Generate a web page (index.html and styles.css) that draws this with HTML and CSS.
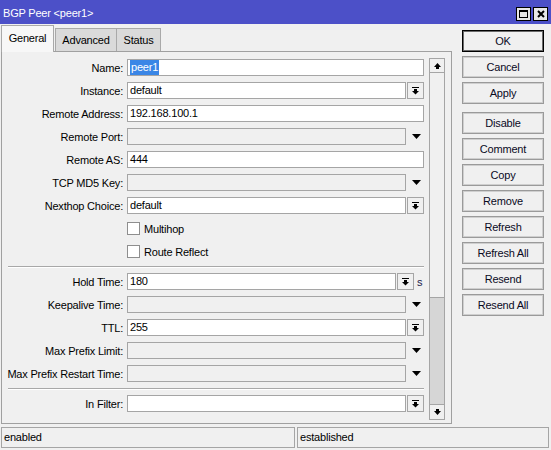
FILE: index.html
```html
<!DOCTYPE html>
<html>
<head>
<meta charset="utf-8">
<link rel="stylesheet" href="styles.css">
</head>
<body>
<div class="window">
  <div class="titlebar">
    <span class="title">BGP Peer &lt;peer1&gt;</span>
    <div class="tb-btns">
      <span class="tb-btn"><span class="max-icon"></span></span>
      <span class="tb-btn"><svg width="8" height="8" viewBox="0 0 8 8"><path d="M1 1L7 7M7 1L1 7" stroke="#000" stroke-width="2"/></svg></span>
    </div>
  </div>
  <div class="main">
    <div class="left">
      <div class="tabs">
        <div class="tab tab-general active">General</div>
        <div class="tab tab-advanced">Advanced</div>
        <div class="tab tab-status">Status</div>
      </div>
      <div class="panel">
        <div class="form">
          <div class="row"><span class="label">Name:</span><span class="field"><span class="sel">peer1</span></span></div>
          <div class="row"><span class="label">Instance:</span><span class="field">default</span><span class="dd-btn"><svg width="7" height="8" viewBox="0 0 7 8"><rect x="0" y="0" width="7" height="1"/><rect x="2" y="2" width="3" height="2"/><path d="M0 4H7L3.5 7.5Z"/></svg></span></div>
          <div class="row"><span class="label">Remote Address:</span><span class="field">192.168.100.1</span></div>
          <div class="row"><span class="label">Remote Port:</span><span class="field disabled"></span><span class="dd-tri"><svg width="9" height="5" viewBox="0 0 9 5"><path d="M0 0H9L4.5 5Z"/></svg></span></div>
          <div class="row"><span class="label">Remote AS:</span><span class="field">444</span></div>
          <div class="row"><span class="label">TCP MD5 Key:</span><span class="field disabled"></span><span class="dd-tri"><svg width="9" height="5" viewBox="0 0 9 5"><path d="M0 0H9L4.5 5Z"/></svg></span></div>
          <div class="row"><span class="label">Nexthop Choice:</span><span class="field">default</span><span class="dd-btn"><svg width="7" height="8" viewBox="0 0 7 8"><rect x="0" y="0" width="7" height="1"/><rect x="2" y="2" width="3" height="2"/><path d="M0 4H7L3.5 7.5Z"/></svg></span></div>
          <div class="row check-row"><span class="checkbox"></span><span class="check-label">Multihop</span></div>
          <div class="row check-row"><span class="checkbox"></span><span class="check-label">Route Reflect</span></div>
          <div class="sep"></div>
          <div class="row"><span class="label">Hold Time:</span><span class="field">180</span><span class="dd-btn"><svg width="7" height="8" viewBox="0 0 7 8"><rect x="0" y="0" width="7" height="1"/><rect x="2" y="2" width="3" height="2"/><path d="M0 4H7L3.5 7.5Z"/></svg></span><span class="unit">s</span></div>
          <div class="row"><span class="label">Keepalive Time:</span><span class="field disabled"></span><span class="dd-tri"><svg width="9" height="5" viewBox="0 0 9 5"><path d="M0 0H9L4.5 5Z"/></svg></span></div>
          <div class="row"><span class="label">TTL:</span><span class="field">255</span><span class="dd-btn"><svg width="7" height="8" viewBox="0 0 7 8"><rect x="0" y="0" width="7" height="1"/><rect x="2" y="2" width="3" height="2"/><path d="M0 4H7L3.5 7.5Z"/></svg></span></div>
          <div class="row"><span class="label">Max Prefix Limit:</span><span class="field disabled"></span><span class="dd-tri"><svg width="9" height="5" viewBox="0 0 9 5"><path d="M0 0H9L4.5 5Z"/></svg></span></div>
          <div class="row"><span class="label">Max Prefix Restart Time:</span><span class="field disabled"></span><span class="dd-tri"><svg width="9" height="5" viewBox="0 0 9 5"><path d="M0 0H9L4.5 5Z"/></svg></span></div>
          <div class="sep"></div>
          <div class="row"><span class="label">In Filter:</span><span class="field"></span><span class="dd-btn"><svg width="7" height="8" viewBox="0 0 7 8"><rect x="0" y="0" width="7" height="1"/><rect x="2" y="2" width="3" height="2"/><path d="M0 4H7L3.5 7.5Z"/></svg></span></div>
        </div>
        <div class="scrollbar">
          <div class="sb-btn"><svg width="7" height="6" viewBox="0 0 7 6"><path d="M3.5 0L7 4H0Z"/><rect x="2" y="4" width="3" height="2"/></svg></div>
          <div class="sb-thumb"></div>
          <div class="sb-track"></div>
          <div class="sb-btn sb-down"><svg width="7" height="6" viewBox="0 0 7 6"><rect x="2" y="0" width="3" height="2"/><path d="M0 2H7L3.5 6Z"/></svg></div>
        </div>
      </div>
    </div>
    <div class="actions">
      <div class="abtn default">OK</div>
      <div class="abtn">Cancel</div>
      <div class="abtn">Apply</div>
      <div class="abtn group">Disable</div>
      <div class="abtn">Comment</div>
      <div class="abtn">Copy</div>
      <div class="abtn">Remove</div>
      <div class="abtn">Refresh</div>
      <div class="abtn">Refresh All</div>
      <div class="abtn">Resend</div>
      <div class="abtn">Resend All</div>
    </div>
  </div>
  <div class="statusbar">
    <div class="status s1">enabled</div>
    <div class="status s2">established</div>
  </div>
</div>
</body>
</html>
```
FILE: styles.css
```css
html, body {
  margin: 0;
  padding: 0;
  background: #f0f0f0;
}
body {
  font-family: "Liberation Sans", Arial, sans-serif;
  font-size: 11px;
  letter-spacing: -0.2px;
  color: #000;
}
.window {
  width: 551px;
  height: 450px;
  background: #f0f0f0;
  display: flex;
  flex-direction: column;
  overflow: hidden;
}
.titlebar {
  height: 24px;
  flex: none;
  background: #4c50c8;
  color: #fff;
  display: flex;
  align-items: center;
  justify-content: space-between;
  padding: 0 3px 0 3px;
}
.title {
  font-size: 11px;
  padding-top: 1px;
}
.tb-btns {
  display: flex;
  gap: 2px;
  margin-top: 3px;
}
.tb-btn {
  width: 15px;
  height: 14px;
  box-sizing: border-box;
  border: 1px solid #000;
  background: #e8e8e8;
  display: flex;
  align-items: center;
  justify-content: center;
}
.max-icon {
  width: 9px;
  height: 8px;
  box-sizing: border-box;
  border: 1px solid #000;
  border-top-width: 2px;
}
.main {
  display: flex;
  height: 400px;
  flex: none;
}
.left {
  margin-left: 1px;
  width: 451px;
  display: flex;
  flex-direction: column;
}
.tabs {
  height: 27px;
  flex: none;
  display: flex;
  align-items: flex-end;
}
.tab {
  height: 23px;
  box-sizing: border-box;
  border: 1px solid #a9a9a9;
  border-bottom: none;
  background: #dadada;
  display: flex;
  align-items: center;
  justify-content: center;
  font-size: 11px;
}
.tab-general { width: 53px; margin-right: 1px; }
.tab-advanced { width: 62px; }
.tab-status { width: 44px; border-left: none; }
.tab.active {
  height: 27px;
  margin-bottom: -1px;
  background: #f7f7f7;
  position: relative;
  padding-bottom: 2px;
}
.panel {
  flex: 1;
  box-sizing: border-box;
  border: 1px solid #a0a0a0;
  background: #f0f0f0;
  display: flex;
}
.form {
  width: 422px;
  padding-top: 7px;
  box-sizing: border-box;
  flex: none;
}
.row {
  display: flex;
  align-items: center;
  height: 17px;
  margin-bottom: 6px;
}
.label {
  width: 121px;
  margin-right: 4px;
  text-align: right;
  white-space: nowrap;
  flex: none;
}
.field {
  flex: 1;
  height: 17px;
  box-sizing: border-box;
  border: 1px solid #a5a5a5;
  background: #fff;
  padding-left: 2px;
  line-height: 15px;
  white-space: nowrap;
  overflow: hidden;
}
.field.disabled {
  background: #f0f0f0;
}
.sel {
  display: inline-block;
  background: #3a86e6;
  color: #fff;
  line-height: 15px;
  padding: 0 1px;
}
.dd-btn {
  width: 17px;
  height: 17px;
  margin-left: 1px;
  box-sizing: border-box;
  border: 1px solid #a5a5a5;
  background: #f0f0f0;
  display: flex;
  align-items: center;
  justify-content: center;
  flex: none;
}
.dd-tri {
  width: 18px;
  height: 17px;
  display: flex;
  align-items: center;
  justify-content: flex-end;
  padding-right: 3px;
  box-sizing: border-box;
  flex: none;
}
.unit {
  width: 10px;
  padding-left: 3px;
  box-sizing: border-box;
  flex: none;
  color: #1a1a4a;
}
.check-row {
  padding-left: 125px;
}
.checkbox {
  width: 13px;
  height: 13px;
  box-sizing: border-box;
  border: 1px solid #8e8e8e;
  background: #fff;
  flex: none;
}
.check-label {
  margin-left: 4px;
}
.sep {
  height: 1px;
  border-top: 1px solid #a8a8a8;
  background: #fff;
  margin: 1px 0 5px 6px;
}
.scrollbar {
  width: 16px;
  margin: 6px 0 3px 5px;
  display: flex;
  flex-direction: column;
  flex: none;
}
.sb-btn {
  height: 15px;
  flex: none;
  box-sizing: border-box;
  border: 1px solid #a5a5a5;
  background: #f0f0f0;
  display: flex;
  align-items: center;
  justify-content: center;
}
.sb-down {
  height: 16px;
}
.sb-thumb {
  height: 225px;
  flex: none;
  box-sizing: border-box;
  border: 1px solid #a5a5a5;
  border-top: none;
  background: #f0f0f0;
}
.sb-track {
  flex: 1;
  box-sizing: border-box;
  border-left: 1px solid #a5a5a5;
  border-right: 1px solid #a5a5a5;
  background: #d6d6d6;
}
.actions {
  margin-left: 10px;
  width: 82px;
  padding-top: 6px;
  display: flex;
  flex-direction: column;
  gap: 4px;
  flex: none;
}
.abtn {
  height: 22px;
  box-sizing: border-box;
  border: 1px solid #9a9a9a;
  box-shadow: inset 0 0 0 1px #cfcfcf;
  background: #f0f0f0;
  display: flex;
  align-items: center;
  justify-content: center;
  color: #0a0a1e;
}
.abtn.default {
  border-color: #000;
  box-shadow: inset 0 0 0 1px #6a6a6a;
}
.abtn.group {
  margin-top: 4px;
}
.statusbar {
  height: 26px;
  flex: none;
  display: flex;
  gap: 2px;
  padding: 3px 2px 2px 1px;
  box-sizing: border-box;
}
.status {
  height: 21px;
  box-sizing: border-box;
  border: 1px solid #a5a5a5;
  padding-left: 2px;
  line-height: 19px;
}
.s1 { width: 294px; }
.s2 { width: 252px; }
```
